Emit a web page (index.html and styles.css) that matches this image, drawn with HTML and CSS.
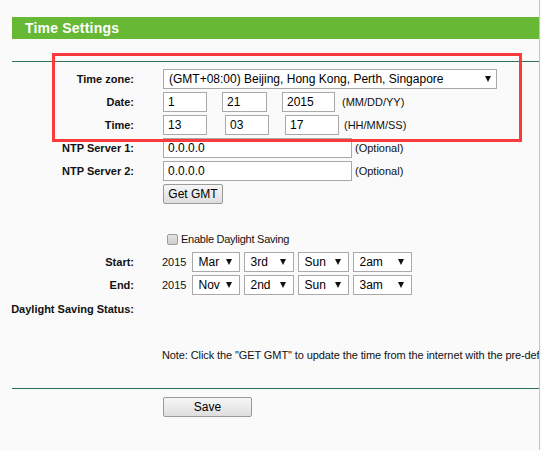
FILE: index.html
```html
<!DOCTYPE html>
<html>
<head>
<meta charset="utf-8">
<title>Time Settings</title>
<link rel="stylesheet" href="styles.css">
</head>
<body>
<div class="page">
  <div class="title-bar">Time Settings</div>
  <div class="rule rule-top"></div>
  <div class="form">
    <div class="row">
      <div class="lbl">Time zone:</div>
      <div class="ctl">
        <span class="sel sel-tz"><select class="w-tz"><option>(GMT+08:00) Beijing, Hong Kong, Perth, Singapore</option></select></span>
      </div>
    </div>
    <div class="row">
      <div class="lbl">Date:</div>
      <div class="ctl">
        <input class="txt w44" value="1">
        <input class="txt w45 ml15" value="21">
        <input class="txt w53 ml15" value="2015">
        <span class="hint ml7">(MM/DD/YY)</span>
      </div>
    </div>
    <div class="row">
      <div class="lbl">Time:</div>
      <div class="ctl">
        <input class="txt w44" value="13">
        <input class="txt w44 ml18" value="03">
        <input class="txt w54 ml16" value="17">
        <span class="hint ml5">(HH/MM/SS)</span>
      </div>
    </div>
    <div class="row">
      <div class="lbl">NTP Server 1:</div>
      <div class="ctl">
        <input class="txt w189" value="0.0.0.0">
        <span class="hint ml3">(Optional)</span>
      </div>
    </div>
    <div class="row">
      <div class="lbl">NTP Server 2:</div>
      <div class="ctl">
        <input class="txt w189" value="0.0.0.0">
        <span class="hint ml3">(Optional)</span>
      </div>
    </div>
    <div class="row">
      <div class="lbl"></div>
      <div class="ctl"><button class="btn btn-gmt">Get GMT</button></div>
    </div>
    <div class="row row-check">
      <div class="lbl"></div>
      <div class="ctl"><span class="check"></span><span class="hint check-text">Enable Daylight Saving</span></div>
    </div>
    <div class="row row-start">
      <div class="lbl">Start:</div>
      <div class="ctl">
        <span class="year">2015</span>
        <span class="sel w48 ml6"><select><option>Mar</option></select></span>
        <span class="sel w50 ml4"><select><option>3rd</option></select></span>
        <span class="sel w51 ml4"><select><option>Sun</option></select></span>
        <span class="sel w59 ml4"><select><option>2am</option></select></span>
      </div>
    </div>
    <div class="row">
      <div class="lbl">End:</div>
      <div class="ctl">
        <span class="year">2015</span>
        <span class="sel w48 ml6"><select><option>Nov</option></select></span>
        <span class="sel w50 ml4"><select><option>2nd</option></select></span>
        <span class="sel w51 ml4"><select><option>Sun</option></select></span>
        <span class="sel w59 ml4"><select><option>3am</option></select></span>
      </div>
    </div>
    <div class="row row-dss">
      <div class="lbl">Daylight Saving Status:</div>
      <div class="ctl"></div>
    </div>
    <div class="row row-note">
      <div class="lbl"></div>
      <div class="ctl note">Note: Click the "GET GMT" to update the time from the internet with the pre-defined NTP Server.</div>
    </div>
  </div>
  <div class="rule rule-bottom"></div>
  <div class="save-row">
    <button class="btn btn-save">Save</button>
  </div>
</div>
<div class="annot"></div>
</body>
</html>
```

FILE: styles.css
```css
html, body {
  margin: 0;
  padding: 0;
  background: #fafafa;
}
body {
  width: 541px;
  height: 450px;
  overflow: hidden;
  position: relative;
  font-family: "Liberation Sans", Arial, sans-serif;
  color: #000;
}
.page {
  box-sizing: border-box;
  width: 540px;
  height: 450px;
  padding: 17px 0 0 12px;
  border-right: 1px solid #c4c4c4;
  overflow: hidden;
}
.title-bar {
  height: 22px;
  line-height: 22px;
  background: #67b834;
  color: #fff;
  font-weight: bold;
  font-size: 14px;
  letter-spacing: 0.2px;
  padding-left: 13px;
}
.rule {
  height: 1px;
  background: #2f7050;
}
.rule-top {
  margin-top: 22px;
}
.form {
  display: flex;
  flex-direction: column;
  gap: 3px;
  margin-top: 7px;
}
.row {
  display: flex;
  align-items: center;
  height: 20px;
}
.lbl {
  flex: none;
  width: 122px;
  display: flex;
  justify-content: flex-end;
  white-space: nowrap;
  font-weight: bold;
  font-size: 11px;
  color: #111;
}
.ctl {
  margin-left: 29px;
  display: flex;
  align-items: center;
  white-space: nowrap;
}
.txt {
  box-sizing: border-box;
  height: 20px;
  border: 1px solid #a9a9a9;
  background: #fff;
  font-family: "Liberation Sans", Arial, sans-serif;
  font-size: 12px;
  padding: 0 0 0 4px;
  margin: 0;
  color: #000;
  outline: none;
}
.hint {
  font-size: 11px;
  color: #111;
}
.w44 { width: 44px; }
.w45 { width: 45px; }
.w53 { width: 53px; }
.w54 { width: 54px; }
.w189 { width: 189px; }
.w48 { width: 48px; }
.w50 { width: 50px; }
.w51 { width: 51px; }
.w59 { width: 59px; }
.ml3 { margin-left: 3px; }
.ml4 { margin-left: 4px; }
.ml5 { margin-left: 5px; }
.ml6 { margin-left: 6px; }
.ml7 { margin-left: 7px; }
.ml15 { margin-left: 15px; }
.ml16 { margin-left: 16px; }
.ml18 { margin-left: 18px; }

.sel {
  position: relative;
  display: inline-block;
  height: 20px;
  box-sizing: border-box;
}
.sel select {
  appearance: none;
  -webkit-appearance: none;
  box-sizing: border-box;
  width: 100%;
  height: 20px;
  border: 1px solid #a9a9a9;
  border-radius: 0;
  background: #fff;
  font-family: "Liberation Sans", Arial, sans-serif;
  font-size: 12px;
  color: #000;
  padding: 0 0 0 5px;
  margin: 0;
  outline: none;
}
.sel::after {
  content: "";
  position: absolute;
  right: 8px;
  top: 7px;
  border-left: 3px solid transparent;
  border-right: 3px solid transparent;
  border-top: 6px solid #111;
}
.sel-tz {
  width: 334px;
}
.sel-tz::after {
  right: 6px;
}
.year {
  font-size: 11px;
  margin-left: -1px;
  color: #111;
}
.btn {
  box-sizing: border-box;
  height: 20px;
  border: 1px solid #9a9a9a;
  border-radius: 2px;
  background: linear-gradient(#f6f6f6, #dedede);
  font-family: "Liberation Sans", Arial, sans-serif;
  font-size: 12px;
  color: #000;
  padding: 0;
  margin: 0;
}
.btn-gmt {
  width: 60px;
}
.row-check {
  margin-top: 23px;
  height: 18px;
}
.check {
  box-sizing: border-box;
  display: inline-block;
  width: 11px;
  height: 11px;
  margin-left: 4px;
  border: 1px solid #9c9c9c;
  border-radius: 2px;
  background: linear-gradient(#e4e4e4, #cfcfcf);
}
.check-text {
  margin-left: 3px;
  letter-spacing: -0.25px;
}
.row-start {
  margin-top: 1px;
}
.row-dss {
  margin-top: 1px;
}
.row-note {
  margin-top: 24px;
  height: 18px;
}
.note {
  font-size: 11px;
  color: #111;
  margin-left: 28px;
  letter-spacing: -0.1px;
}
.rule-bottom {
  margin-top: 24px;
}
.save-row {
  margin-top: 8px;
  padding-left: 151px;
}
.btn-save {
  width: 89px;
}
.annot {
  position: absolute;
  left: 52px;
  top: 53px;
  width: 470px;
  height: 89px;
  box-sizing: border-box;
  border: 3px solid #fb3b3b;
}
```
